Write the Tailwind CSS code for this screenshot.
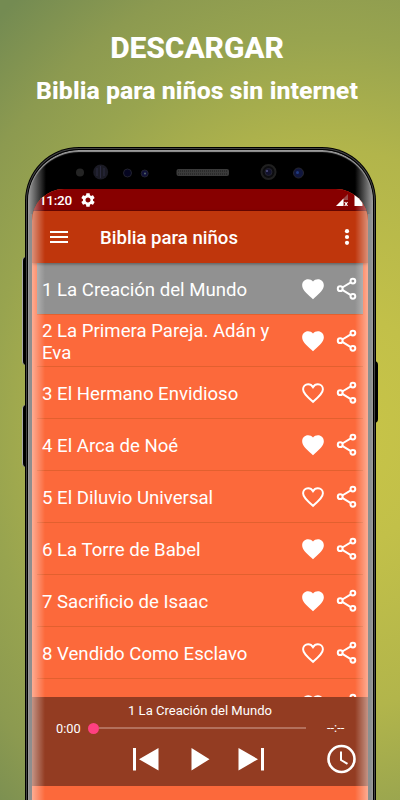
<!DOCTYPE html>
<html lang="es">
<head>
<meta charset="utf-8">
<title>Biblia para niños</title>
<script src="https://cdn.jsdelivr.net/npm/@tailwindcss/browser@4"></script>
</head>
<body class="w-[400px] h-[800px] overflow-hidden font-['Roboto',sans-serif] text-white">
<svg class="hidden">
  <symbol id="heart" viewBox="0 0 24 24"><path fill="#fff" d="M12 21.350l-1.450-1.320C5.400 15.360 2 12.280 2 8.500 2 5.420 4.420 3 7.500 3c1.740 0 3.410.810 4.500 2.090C13.090 3.810 14.760 3 16.500 3 19.580 3 22 5.420 22 8.500c0 3.780-3.400 6.860-8.550 11.540L12 21.350z"/></symbol>
  <symbol id="heart-o" viewBox="0 0 24 24"><path fill="none" stroke="#fff" stroke-width="1.800" d="M12 20.200l-.9-.8C6.200 14.950 2.850 11.950 2.850 8.500c0-2.650 2-4.650 4.650-4.650 1.700 0 3.500 1 4.500 2.750 1-1.750 2.800-2.750 4.500-2.750 2.650 0 4.650 2 4.650 4.650 0 3.450-3.350 6.450-8.250 10.900z"/></symbol>
  <symbol id="share" viewBox="0 0 22 24"><g fill="none" stroke="#fff" stroke-width="2"><circle cx="4.200" cy="11.700" r="2.400"/><circle cx="16.900" cy="4.100" r="2.400"/><circle cx="16.900" cy="19.300" r="2.400"/><path d="M6.300 10.500l8.500-5.100M6.300 12.900l8.500 5.200"/></g></symbol>
</svg>
<main class="relative w-[400px] h-[800px] overflow-hidden bg-[radial-gradient(ellipse_490px_560px_at_330px_430px,#c9c547_0%,#c2c049_22%,#b2b54b_50%,#98a44f_70%,#8c9a50_84%,#748b52_100%)]">
  <header class="pt-[31px] text-center pr-[6px]">
    <h1 class="text-[30px] leading-[34px] font-extrabold tracking-[-0.1px]">DESCARGAR</h1>
    <p class="mt-[11px] text-[24.800px] leading-[30px] font-extrabold tracking-[0.08px]">Biblia para niños sin internet</p>
  </header>

  <div class="absolute left-[22px] top-[257px] w-[4px] h-[108px] bg-black border-l border-[#aaa] rounded-l-sm"></div>
  <div class="absolute left-[22px] top-[405px] w-[4px] h-[62px] bg-black border-l border-[#aaa] rounded-l-sm"></div>
  <div class="absolute left-[374px] top-[361px] w-[4px] h-[62px] bg-black rounded-r-sm"></div>

  <section class="absolute left-[25px] top-[147px] w-[351px] h-[700px] rounded-[54px_54px_0_0] bg-black p-[1px]">
    <div class="h-full rounded-[53px_53px_0_0] border border-b-0 border-[#444] p-[1px]">
      <div class="relative h-full rounded-[51px_51px_0_0] overflow-hidden bg-black">
        <div class="absolute left-0 top-0 w-[18px] h-full bg-linear-to-r from-[#a0a0a0] to-transparent"></div>
        <div class="absolute right-0 top-0 w-[18px] h-full bg-linear-to-l from-[#a0a0a0] to-transparent"></div>
        <div class="absolute inset-0 rounded-[51px_51px_0_0] shadow-[inset_0_2px_1px_#999]"></div>
        <div class="absolute left-[1px] top-[64px] w-[3px] h-full bg-[#8e8e8e]"></div>
        <div class="absolute right-[2px] top-[64px] w-[3px] h-full bg-[#8a9090]"></div>
      </div>
    </div>
  </section>

  <svg class="absolute left-0 top-[147px]" width="400" height="44" viewBox="0 147 400 44">
    <circle cx="80" cy="172.500" r="4" fill="#242424"/>
    <circle cx="100.700" cy="172" r="7.500" fill="#1a1a24"/>
    <path d="M97 168v8M100.500 166v12M104 168v8" stroke="#2a2a40" stroke-width="1"/>
    <circle cx="127.500" cy="173" r="4" fill="#050520" stroke="#22222e"/>
    <circle cx="144.700" cy="173.500" r="3.500" fill="#101038" stroke="#22222e"/><circle cx="145" cy="173.500" r="1" fill="#556666"/>
    <rect x="176.500" y="169" width="52.500" height="7" rx="2" fill="#3a3a3a"/>
    <path d="M178 171h50M178 174h50" stroke="#1c1c1c" stroke-dasharray="1 1"/>
    <circle cx="268.500" cy="172" r="7" fill="#0c0c0f" stroke="#202020" stroke-width="2"/><circle cx="268.500" cy="172" r="3.500" fill="#12122e" stroke="#242430"/><circle cx="267" cy="171" r="1" fill="#555588"/>
    <circle cx="298.500" cy="173" r="5" fill="#10163e" stroke="#26262e"/><circle cx="297.500" cy="172.500" r="1.500" fill="#203a80"/>
  </svg>

  <section class="absolute left-[32px] top-[189px] w-[336px] h-[611px] rounded-[32px_32px_0_0] overflow-hidden bg-[#fc693b] flex flex-col">
    <div class="h-[22px] shrink-0 bg-[#870000] flex items-center pl-[7px] text-[13.500px] font-medium border-b border-[#6c0500]">
      <span class="w-[42px] leading-[22px] tracking-[-0.3px]">11:20</span>
      <svg class="w-[14px] h-[14px]" viewBox="2 2 20 20"><path fill="#fff" d="M19.140 12.940c.04-.3.060-.610.060-.940 0-.320-.020-.640-.070-.940l2.030-1.580c.180-.140.230-.410.120-.610l-1.920-3.320c-.120-.220-.370-.290-.590-.220l-2.390.960c-.5-.380-1.030-.7-1.620-.940l-.360-2.540c-.040-.240-.240-.410-.480-.410h-3.840c-.240 0-.430.170-.470.410l-.360 2.540c-.590.240-1.130.570-1.620.940l-2.390-.960c-.220-.080-.470 0-.590.220L2.740 8.870c-.120.210-.080.470.120.610l2.030 1.580c-.050.3-.090.630-.090.940s.020.640.070.940l-2.030 1.580c-.180.140-.230.410-.120.610l1.920 3.320c.120.220.370.290.590.220l2.390-.960c.5.380 1.030.7 1.620.940l.360 2.540c.050.240.240.410.480.410h3.840c.240 0 .440-.170.470-.410l.360-2.540c.590-.240 1.130-.560 1.620-.940l2.390.960c.220.080.470 0 .590-.220l1.920-3.320c.120-.220.070-.470-.120-.610l-2.010-1.580zM12 15.600c-1.980 0-3.600-1.620-3.600-3.600s1.620-3.600 3.600-3.600 3.600 1.620 3.600 3.600-1.620 3.600-3.600 3.600z"/></svg>
      <svg class="ml-auto mr-[5px] w-[27px] h-[12px]" viewBox="0 0 27 12"><path fill="#9b4b4b" d="M0 12L12 0v12z"/><path fill="#870000" d="M7.500 6h5v6h-5z"/><path fill="#fff" d="M0 12l7.500-7.500V12zM18.500 1h6l2 3v8h-8z"/><path d="M8.700 8l2.800 4M11.500 8l-2.800 4" stroke="#fff" stroke-width="1.200"/></svg>
    </div>
    <div class="h-[52px] shrink-0 bg-[#bf360c] flex items-center pl-[18px] pr-[18px] shadow-[0_1px_3px_rgba(0,0,0,.4)] z-10">
      <span class="w-[18px] h-[12px] border-y-2 border-white flex items-center"><span class="w-full h-[2px] bg-white"></span></span>
      <h2 class="ml-[32px] pt-[2px] text-[18.600px] leading-[24px] font-medium">Biblia para niños</h2>
      <svg class="ml-auto w-[6px] h-[16px]" viewBox="0 0 6 16"><g fill="#fff"><circle cx="3" cy="2.200" r="2.100"/><circle cx="3" cy="8" r="2.100"/><circle cx="3" cy="13.800" r="2.100"/></g></svg>
    </div>
    <ul class="h-[434px] shrink-0 overflow-hidden px-[5px] text-[18.600px] leading-[22px]">
      <li class="h-[52px] flex items-center pl-[5px] pr-[5px] bg-[#919191] border-b border-[#e2602f]"><span class="flex-1 pt-[2px]">1 La Creación del Mundo</span><svg class="w-[26px] h-[26px]"><use href="#heart"/></svg><svg class="ml-[10px] w-[22px] h-[24px]"><use href="#share"/></svg></li>
      <li class="h-[52px] flex items-center pl-[5px] pr-[5px] border-b border-[#e2602f]"><span class="flex-1 pt-[2px]">2 La Primera Pareja. Adán y<br>Eva</span><svg class="w-[26px] h-[26px]"><use href="#heart"/></svg><svg class="ml-[10px] w-[22px] h-[24px]"><use href="#share"/></svg></li>
      <li class="h-[52px] flex items-center pl-[5px] pr-[5px] border-b border-[#e2602f]"><span class="flex-1 pt-[2px]">3 El Hermano Envidioso</span><svg class="w-[26px] h-[26px]"><use href="#heart-o"/></svg><svg class="ml-[10px] w-[22px] h-[24px]"><use href="#share"/></svg></li>
      <li class="h-[52px] flex items-center pl-[5px] pr-[5px] border-b border-[#e2602f]"><span class="flex-1 pt-[2px]">4 El Arca de Noé</span><svg class="w-[26px] h-[26px]"><use href="#heart"/></svg><svg class="ml-[10px] w-[22px] h-[24px]"><use href="#share"/></svg></li>
      <li class="h-[52px] flex items-center pl-[5px] pr-[5px] border-b border-[#e2602f]"><span class="flex-1 pt-[2px]">5 El Diluvio Universal</span><svg class="w-[26px] h-[26px]"><use href="#heart-o"/></svg><svg class="ml-[10px] w-[22px] h-[24px]"><use href="#share"/></svg></li>
      <li class="h-[52px] flex items-center pl-[5px] pr-[5px] border-b border-[#e2602f]"><span class="flex-1 pt-[2px]">6 La Torre de Babel</span><svg class="w-[26px] h-[26px]"><use href="#heart"/></svg><svg class="ml-[10px] w-[22px] h-[24px]"><use href="#share"/></svg></li>
      <li class="h-[52px] flex items-center pl-[5px] pr-[5px] border-b border-[#e2602f]"><span class="flex-1 pt-[2px]">7 Sacrificio de Isaac</span><svg class="w-[26px] h-[26px]"><use href="#heart"/></svg><svg class="ml-[10px] w-[22px] h-[24px]"><use href="#share"/></svg></li>
      <li class="h-[52px] flex items-center pl-[5px] pr-[5px] border-b border-[#e2602f]"><span class="flex-1 pt-[2px]">8 Vendido Como Esclavo</span><svg class="w-[26px] h-[26px]"><use href="#heart-o"/></svg><svg class="ml-[10px] w-[22px] h-[24px]"><use href="#share"/></svg></li>
      <li class="h-[52px] flex items-center justify-end pr-[5px]"><svg class="w-[26px] h-[26px]"><use href="#heart-o"/></svg><svg class="ml-[10px] w-[22px] h-[24px]"><use href="#share"/></svg></li>
    </ul>
    <div class="h-[89px] shrink-0 bg-[#933c22] pt-[5px]">
      <p class="text-center text-[13.050px] leading-[17px]">1 La Creación del Mundo</p>
      <div class="flex items-center h-[18px] pl-[24px] text-[12.800px]">
        <span class="w-[32px] pt-px">0:00</span>
        <span class="w-[11px] h-[11px] rounded-full bg-[#ff4081]"></span>
        <span class="w-[207px] h-[2px] bg-[#b3705c]"></span>
        <span class="ml-[21px]">--:--</span>
      </div>
      <svg class="ml-[96px] mt-[7px] w-[232px] h-[30px]" viewBox="128 744 232 30">
        <path fill="#fff" d="M133 748h3v22.500h-3zM158.500 748v22.500L139 759.200zM191.500 748v22.500l18-11.300zM238.500 748v22.500l19.500-11.300zM261 748h3v22.500h-3z"/>
        <circle cx="341.500" cy="759" r="13" fill="none" stroke="#fff" stroke-width="2.600"/><path d="M341 751.500v8.500l6.500 3.800" fill="none" stroke="#fff" stroke-width="2"/>
      </svg>
    </div>
    <div class="absolute left-0 top-0 w-[13px] h-full bg-linear-to-r from-white/45 to-transparent z-20"></div>
    <div class="absolute right-0 top-0 w-[13px] h-full bg-linear-to-l from-white/45 to-transparent z-20"></div>
  </section>
</main>
</body>
</html>
